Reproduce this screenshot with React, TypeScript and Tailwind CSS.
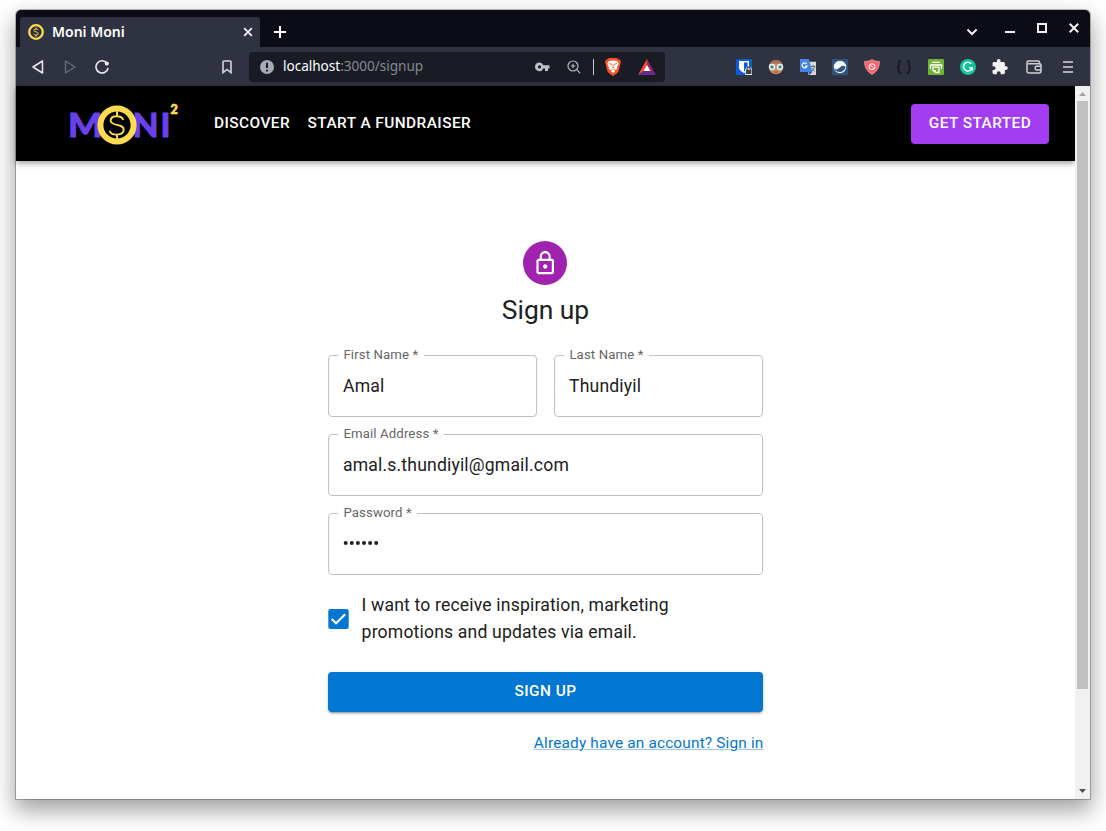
import type { ReactNode } from "react";

function Slot({ children }: { children: ReactNode }) {
  return <span className="flex h-full w-8 shrink-0 items-center justify-center">{children}</span>;
}

function TabCoin() {
  return (
    <svg width="16" height="16" viewBox="0 0 16 16">
      <circle cx="8" cy="8" r="6.8" fill="#2b2e3a" stroke="#ffd94f" strokeWidth="2.3" />
      <path d="M10.4 5.9C9.8 5 6 4.4 5.8 6.4C5.7 8.2 10.4 7.5 10.3 9.6C10.2 11.5 6.1 11.3 5.5 10M8 3.4V5M8 11V12.6" fill="none" stroke="#ffd94f" strokeWidth="1" />
    </svg>
  );
}

function Logo() {
  return (
    <svg width="112" height="46" viewBox="0 0 112 46" className="block">
      <g fill="#6941ea" stroke="#6941ea" strokeWidth="0.8" fontFamily="Lato, sans-serif" fontWeight="900" fontSize="33">
        <text x="0" y="35.6" textLength="35" lengthAdjust="spacingAndGlyphs">M</text>
        <text x="64.5" y="35.6" textLength="26.5" lengthAdjust="spacingAndGlyphs">N</text>
        <text x="92.6" y="35.6">I</text>
      </g>
      <circle cx="49" cy="24" r="16.6" fill="#000" stroke="#ffdb50" strokeWidth="6" />
      <path d="M55.2 19C53.7 14 42.8 13.8 42.6 19.6C42.4 25.4 56 22.4 55.7 28.8C55.4 35 43.2 35.2 41.6 29.8M49 9.5V15.4M49 33V38.6" fill="none" stroke="#ffdb50" strokeWidth="1.9" />
      <text x="102.4" y="12.7" fill="#ffdb50" stroke="#ffdb50" strokeWidth="0.7" fontFamily="Lato, sans-serif" fontWeight="900" fontSize="12.5">2</text>
    </svg>
  );
}

function TitleBar() {
  return (
    <div className="flex h-[37px] items-end bg-[#0b0c15] pl-1 text-white">
      <div className="flex h-[30px] w-[240px] items-center rounded-t-[3px] bg-[#2f3341] pl-2 pr-[7px]">
        <TabCoin />
        <span className="ml-2 grow whitespace-nowrap font-['Noto_Sans',sans-serif] text-[14px] font-semibold leading-none">
          Moni Moni
        </span>
        <svg width="10" height="10" viewBox="0 0 10 10" stroke="#fff" strokeWidth="1.7"><path d="M1.2 1.2L8.8 8.8M8.8 1.2L1.2 8.8" /></svg>
      </div>
      <svg width="12" height="12" viewBox="0 0 12 12" stroke="#fff" strokeWidth="2" className="mb-[9px] ml-[14px]"><path d="M6 0V12M0 6H12" /></svg>
      <span className="grow" />
      <div className="flex h-full items-start pr-[11px] pt-[13px]">
        <svg width="112" height="16" viewBox="0 0 112 16" fill="none" stroke="#f0f0f0">
          <path d="M.4 6.5L5 11L9.6 6.5" strokeWidth="2" />
          <path d="M38 9H48" strokeWidth="2" />
          <rect x="71" y="1" width="8" height="8" strokeWidth="2" />
          <path d="M102.7 .8L111.2 9.3M111.2 .8L102.7 9.3" strokeWidth="2" />
        </svg>
      </div>
    </div>
  );
}

function AddressBar() {
  return (
    <div className="flex h-[30px] w-[416px] items-center rounded bg-[#191c24] pl-[11px]">
      <svg width="14" height="14" viewBox="0 0 14 14"><circle cx="7" cy="7" r="7" fill="#a6aab4" /><path d="M7 2.7V8" stroke="#191c24" strokeWidth="2" /><path d="M7 9.7V11.6" stroke="#191c24" strokeWidth="2" /></svg>
      <span className="ml-[9px] w-[243px] whitespace-nowrap pb-[2px] font-['Noto_Sans',sans-serif] text-[13.6px] leading-none tracking-[-0.03px] text-white">
        localhost<span className="text-[#858990]">:3000/signup</span>
      </span>
      <Slot>
        <svg width="15" height="10" viewBox="0 0 15 10" fill="#c0c1c4"><path fillRule="evenodd" d="M4.5.5A4.3 4.3 0 1 0 8.3 6.5H10V9H13V6.5H14.5V3.2H8.3A4.3 4.3 0 0 0 4.5.5ZM4.5 3.3A1.6 1.6 0 1 1 4.5 6.5A1.6 1.6 0 0 1 4.5 3.3Z" /></svg>
      </Slot>
      <Slot>
        <svg width="14" height="14" viewBox="0 0 14 14" fill="none" stroke="#b7b9be" strokeWidth="1.2"><circle cx="6" cy="6" r="5" /><path d="M9.7 9.7L13.3 13.3M3.7 6H8.3M6 3.7V8.3" /></svg>
      </Slot>
      <span className="ml-[3px] h-4 w-px bg-[#c7c9ce]" />
      <svg width="16" height="18" viewBox="0 0 16 18" className="ml-[11px]">
        <path d="M4 0H12L13.5 1.5L15 1.4L16 4L15.3 6L13.5 13.5L12 15.3L8 18L4 15.3L2.5 13.5L.7 6L0 4L1 1.4L2.5 1.5Z" fill="#fb542b" />
        <path d="M4 3L8 2.6L12 3L13.8 5.5L12 9.2L12.3 11L10 12L9 11L8 10.8L10.2 13.2L8 15L5.8 13.2L8 10.8L7 11L6 12L3.7 11L4 9.2L2.2 5.5Z" fill="#fff" />
        <path d="M4 5.5L6.8 6.3L6 7.5M12 5.5L9.2 6.3L10 7.5M8 6.5V8.6M6.8 9.2L8 10L9.2 9.2" stroke="#fb542b" strokeWidth=".8" fill="none" />
      </svg>
      <svg width="18" height="16" viewBox="0 0 18 16" className="ml-[17px]">
        <path d="M9 0L0 16L5.6 11.9L9 5.7Z" fill="#ff4b32" /><path d="M9 0L18 16L12.4 11.9L9 5.7Z" fill="#9e1f63" /><path d="M0 16L5.6 11.9H12.4L18 16Z" fill="#662d91" /><path d="M9 5.7L5.5 12H12.5Z" fill="#fff" />
      </svg>
    </div>
  );
}

function Extensions() {
  return (
    <div className="flex h-full items-center">
      <Slot>
        <svg width="16" height="16" viewBox="0 0 16 16"><rect width="16" height="16" rx="1.5" fill="#0b5bdc" /><path d="M3 2H13V8.5C13 11.5 8 14 8 14C8 14 3 11.5 3 8.5Z" fill="#fff" /><path d="M8 3.4H11.6V8.5C11.6 10.2 9.5 11.7 8 12.5Z" fill="#0b5bdc" /><path d="M9.2 10.2L10.8 8H14.6L16 10.2V16H9.2Z" fill="#e7e7e7" /><path d="M10 10.8H15.4V15H10Z" fill="#424242" /><path d="M11.2 11V9.6A1.5 1.5 0 0 1 14.2 9.6V11" fill="none" stroke="#424242" strokeWidth="1.1" /></svg>
      </Slot>
      <Slot>
        <svg width="16" height="16" viewBox="0 0 16 16"><circle cx="8" cy="8.3" r="7" fill="#c98d68" /><path d="M1.2 6.3A7 7 0 0 1 14.8 6.3L12 4.5H4Z" fill="#a5714f" /><g fill="#8fb5b5" stroke="#e8f2ef" strokeWidth="1.3"><circle cx="4" cy="8" r="2.6" /><circle cx="12" cy="8" r="2.6" /></g><circle cx="4" cy="8" r="1" fill="#4c6d70" /><circle cx="12" cy="8" r="1" fill="#4c6d70" /><path d="M6 12.8Q8 13.7 10 12.8" fill="none" stroke="#934c39" strokeWidth="1" /></svg>
      </Slot>
      <Slot>
        <svg width="16" height="16" viewBox="0 0 16 16"><path d="M6 2.7H16V16H8.5Z" fill="#dad9d4" /><path d="M0 0H8.8L12.5 13H0Z" fill="#4285ea" /><path d="M8.5 13H12.5L9 16Z" fill="#2756b8" /><path d="M6.7 5A2.5 2.5 0 1 0 7 7H4.8" fill="none" stroke="#fff" strokeWidth="1.2" /><path d="M11 7.5H15.5M13 6V8M14.7 8Q13.4 11 11.8 12.4M12 9Q13 11 15 12.4" fill="none" stroke="#60777a" strokeWidth="1" /></svg>
      </Slot>
      <Slot>
        <svg width="16" height="16" viewBox="0 0 16 16"><rect width="16" height="16" rx="1.3" fill="#315581" /><circle cx="8" cy="8" r="6.2" fill="#f5f7f8" /><path d="M2.5 9Q4 11.3 6.3 9.8L9 7.5Q11 6 13.5 7.6A6 6 0 0 1 3 11Z" fill="#315581" /></svg>
      </Slot>
      <Slot>
        <svg width="16" height="16" viewBox="0 0 16 16"><path d="M8 .5L10.2 1.8L15.5 2.6Q15.8 11 8 15.5Q.2 11 .5 2.6L5.8 1.8Z" fill="#ff646d" stroke="#ffb2b6" strokeWidth=".6" /><circle cx="8" cy="7.7" r="3" fill="none" stroke="#fff" strokeWidth="1" /><path d="M6.2 6L9.9 9.5" stroke="#fff" strokeWidth="1" /></svg>
      </Slot>
      <Slot>
        <svg width="16" height="16" viewBox="0 0 16 16" fill="none" stroke="#14161b" strokeWidth="1.5"><path d="M5 1.5Q2.8 1.5 2.8 4V6Q2.8 8 1 8Q2.8 8 2.8 10V12Q2.8 14.5 5 14.5M11 1.5Q13.2 1.5 13.2 4V6Q13.2 8 15 8Q13.2 8 13.2 10V12Q13.2 14.5 11 14.5" /></svg>
      </Slot>
      <Slot>
        <svg width="16" height="16" viewBox="0 0 16 16"><rect width="16" height="16" rx="1" fill="#70b335" /><g fill="none" stroke="#fff" strokeWidth="1.3"><path d="M4 3.4H12M3 9.3H2.5V6H13.5V9.3H13" /><path d="M5 8.2H11V13.5H8L5 11.3Z" /></g><path d="M5 11H8V13.5Z" fill="#fff" /></svg>
      </Slot>
      <Slot>
        <svg width="16" height="16" viewBox="0 0 16 16"><circle cx="8" cy="8" r="8" fill="#11c39b" /><path d="M11.3 4.8A4.4 4.4 0 1 0 12.2 8.8H9.2M12.2 8.4V11.4" fill="none" stroke="#fff" strokeWidth="1.5" /></svg>
      </Slot>
      <Slot>
        <svg width="16" height="16" viewBox="1.5 1 21.5 22" fill="#f1f1f1"><path d="M20.5 11H19V7c0-1.1-.9-2-2-2h-4V3.5a2.5 2.5 0 0 0-5 0V5H4c-1.1 0-2 .9-2 2v3.8h1.5a2.7 2.7 0 0 1 0 5.4H2V20c0 1.1.9 2 2 2h3.8v-1.5a2.7 2.7 0 0 1 5.4 0V22H17c1.1 0 2-.9 2-2v-4h1.5a2.5 2.5 0 0 0 0-5Z" /></svg>
      </Slot>
      <span className="flex w-9 justify-center">
        <svg width="16" height="14" viewBox="0 0 16 14" fill="none" stroke="#cfd0d4" strokeWidth="1.5"><path d="M13.5 4V2.5Q13.5 1 12 1H2.5Q1 1 1 2.5V11Q1 13 3 13H13Q15 13 15 11V5Q15 3.8 13.5 3.8H2" /><path d="M15 6.3H10.3A2 2 0 0 0 10.3 10H15" /></svg>
      </span>
      <Slot>
        <svg width="10" height="12" viewBox="0 0 10 12" stroke="#d6d7da" strokeWidth="1.6"><path d="M0 1H10M0 6H10M0 11H10" /></svg>
      </Slot>
    </div>
  );
}

function Toolbar() {
  return (
    <div className="flex h-[39px] items-center bg-[#2f3341] pl-1.5 pr-1.5">
      <Slot><svg width="12" height="14" viewBox="0 0 12 14" fill="none" stroke="#e9eaec" strokeWidth="1.5" strokeLinejoin="round"><path d="M10.5 1V13L1 7Z" /></svg></Slot>
      <Slot><svg width="12" height="14" viewBox="0 0 12 14" fill="none" stroke="#686c78" strokeWidth="1.4" strokeLinejoin="round"><path d="M1.5 1V13L11 7Z" /></svg></Slot>
      <Slot><svg width="14" height="14" viewBox="0 0 14 14" fill="none"><path d="M11.8 3A6.1 6.1 0 1 0 13.1 8" stroke="#e9eaec" strokeWidth="1.6" /><circle cx="11.8" cy="3.6" r="2.1" fill="#e9eaec" /></svg></Slot>
      <span className="w-[93px]" />
      <Slot><svg width="10" height="14" viewBox="0 0 10 14" fill="none" stroke="#d4d5d8" strokeWidth="1.6"><path d="M1 12.6V2Q1 1 2 1H8Q9 1 9 2V12.6L5 9.4Z" /></svg></Slot>
      <span className="w-1.5" />
      <AddressBar />
      <span className="grow" />
      <Extensions />
    </div>
  );
}

function Field({ label, value, password }: { label: string; value: string; password?: boolean }) {
  return (
    <div className="relative flex h-[62px] items-center rounded border border-[#c0c0c0] px-[14px] text-[17.6px] tracking-[0.165px] text-[#202020]">
      <span className="absolute -top-[9px] left-[9px] bg-white px-[5.4px] text-[13.2px] leading-4 tracking-[0.124px] text-[#666]">
        {label} *
      </span>
      {password ? (
        <svg width="36" height="6" viewBox="0 0 36 6" fill="#202020" className="-mt-0.5" aria-label={value}>
          {[2.7, 8.8, 14.9, 21, 27.1, 33.2].map((x) => <circle key={x} cx={x} cy="3" r="2" />)}
        </svg>
      ) : (
        <span className="leading-[25px]">{value}</span>
      )}
    </div>
  );
}

function SignUpForm() {
  return (
    <main className="ml-[312px] flex w-[435px] flex-col pt-20">
      <div className="mr-px flex size-11 items-center justify-center self-center rounded-full bg-[#9f23ae]">
        <svg width="26.4" height="26.4" viewBox="0 0 24 24" fill="#fff" className="ml-px"><path d="M12 17c1.1 0 2-.9 2-2s-.9-2-2-2-2 .9-2 2 .9 2 2 2zm6-9h-1V6c0-2.76-2.24-5-5-5S7 3.24 7 6v2H6c-1.1 0-2 .9-2 2v10c0 1.1.9 2 2 2h12c1.1 0 2-.9 2-2V10c0-1.1-.9-2-2-2zM8.9 6c0-1.71 1.39-3.1 3.1-3.1s3.1 1.39 3.1 3.1v2H8.9V6zM18 20H6V10h12v10z" /></svg>
      </div>
      <h1 className="mt-[8px] text-center text-[26.4px] leading-[35px]">Sign up</h1>
      <div className="mt-[27px] grid grid-cols-2 gap-[17px]">
        <Field label="First Name" value="Amal" />
        <Field label="Last Name" value="Thundiyil" />
        <div className="col-span-2"><Field label="Email Address" value="amal.s.thundiyil@gmail.com" /></div>
        <div className="col-span-2"><Field label="Password" value="Password" password /></div>
      </div>
      <label className="mt-[17px] flex items-center text-[17.6px] leading-[27px] tracking-[0.165px]">
        <svg width="21" height="20" viewBox="0 0 21 20" className="mr-[12.6px] shrink-0"><rect x=".3" width="20.4" height="20" rx="2" fill="#0276d0" /><path d="M3.7 10.1L8 14.2L17.2 5.2" fill="none" stroke="#fff" strokeWidth="2.1" /></svg>
        <span>I want to receive inspiration, marketing<br />promotions and updates via email.</span>
      </label>
      <button className="mt-[26px] h-10 rounded bg-[#0276d0] pb-px text-[15.4px] font-medium leading-[23px] tracking-[0.44px] text-white shadow-[0_3px_1px_-2px_rgba(0,0,0,0.2),0_2px_2px_0_rgba(0,0,0,0.14),0_1px_5px_0_rgba(0,0,0,0.12)]">
        SIGN UP
      </button>
      <a className="-mr-[0.5px] mt-[20px] self-end whitespace-nowrap text-[15.4px] leading-[22px] tracking-[0.165px] text-[#0276d0] underline decoration-[#0276d0]/40 decoration-1">
        Already have an account? Sign in
      </a>
    </main>
  );
}

export default function App() {
  return (
    <div className="h-[831px] w-[1106px] overflow-hidden bg-white pl-4 pt-2.5 font-[Roboto,sans-serif] text-[#202020]">
      <div className="flex h-[789px] w-[1074px] flex-col rounded-t-[5px] shadow-[0_0_0_1px_rgba(0,0,0,0.25),0_10px_22px_2px_rgba(0,0,0,0.36)]">
        <div className="overflow-hidden rounded-t-[5px]">
          <TitleBar />
          <Toolbar />
        </div>
        <div className="flex min-h-0 grow bg-white">
          <div className="w-[1059px]">
            <header className="flex h-[75px] items-center bg-black pl-[52px] pr-[26px] text-[15.4px] font-medium tracking-[0.44px] text-white shadow-[0_2px_4px_-1px_rgba(0,0,0,0.2),0_4px_5px_0_rgba(0,0,0,0.14),0_1px_10px_0_rgba(0,0,0,0.12)]">
              <Logo />
              <nav className="ml-[34px] flex gap-[17.5px] whitespace-nowrap"><a>DISCOVER</a><a>START A FUNDRAISER</a></nav>
              <span className="grow" />
              <button className="h-10 w-[138px] rounded bg-[#a33df1] pb-px leading-[23px] tracking-[0.44px]">GET STARTED</button>
            </header>
            <SignUpForm />
          </div>
          <div className="flex w-[15px] flex-col items-center justify-between bg-[#f1f1f1]">
            <div className="flex flex-col items-center">
              <svg width="15" height="15" viewBox="0 0 15 15"><path d="M4 10L7.5 6L11 10Z" fill="#a3a3a3" /></svg>
              <div className="h-[588px] w-[11px] bg-[#c1c1c1]" />
            </div>
            <svg width="15" height="15" viewBox="0 0 15 15"><path d="M4 5L7.5 9L11 5Z" fill="#505050" /></svg>
          </div>
        </div>
      </div>
    </div>
  );
}
